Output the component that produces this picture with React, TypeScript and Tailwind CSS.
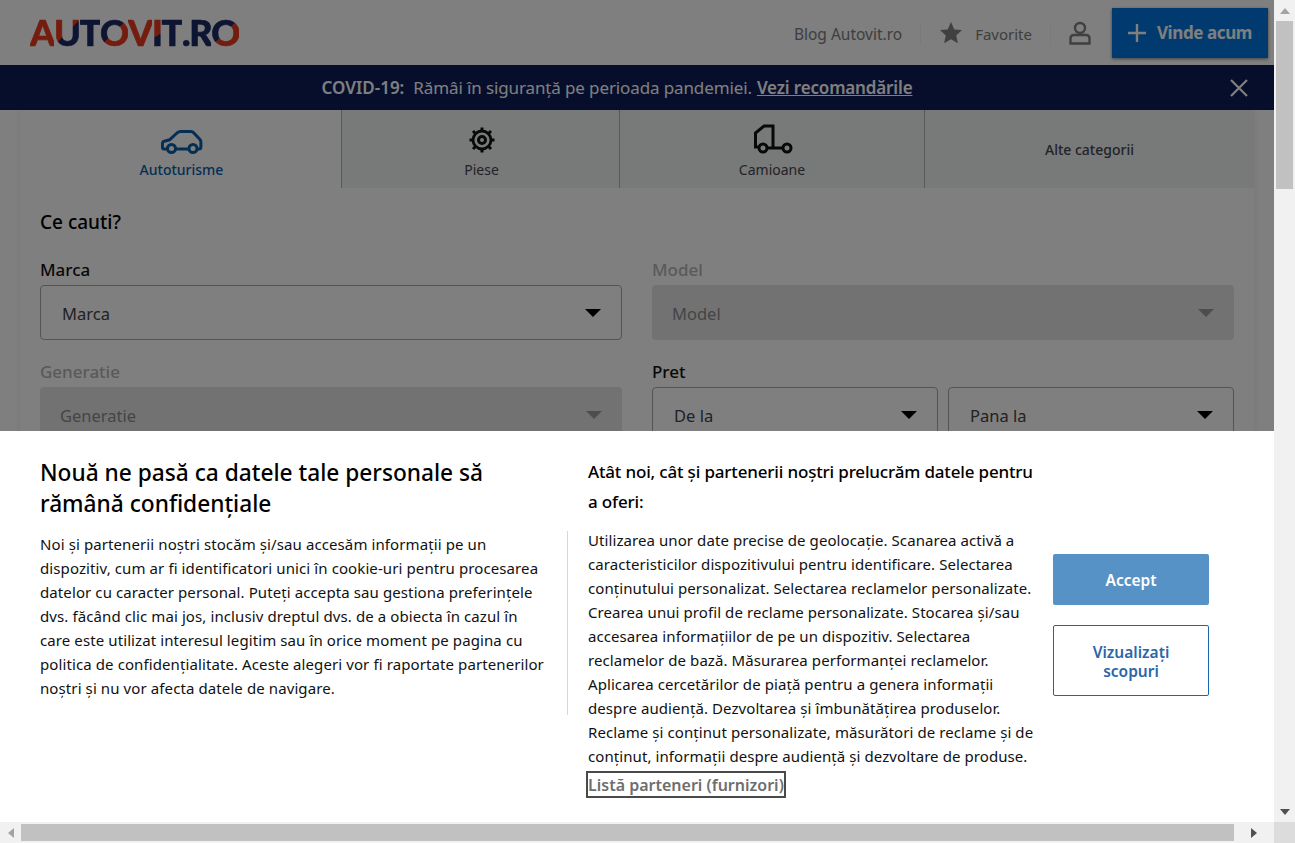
import React from "react";

const font = { fontFamily: '"Noto Sans", sans-serif' };

function Caret({ dim }: { dim?: boolean }) {
  return (
    <svg width="16" height="8" viewBox="0 0 16 8" className={dim ? "text-[#9a9a9a]" : "text-black"}>
      <path d="M0 0h16L8 8z" fill="currentColor" />
    </svg>
  );
}

function Select({ label, disabled, className }: { label: string; disabled?: boolean; className?: string }) {
  return (
    <div
      className={
        "flex h-[55px] items-center justify-between rounded-[4px] pr-[20px] text-[16.5px] font-normal " +
        (disabled ? "bg-[#e4e5e7] pl-[20px] text-[#8a8a8a] " : "border border-[#a8a8a8] bg-white pl-[21px] text-[#444] ") +
        (className ?? "")
      }
    >
      <span className="pt-[3px]">{label}</span>
      <Caret dim={disabled} />
    </div>
  );
}

function LogoLetter({ ch, cls }: { ch: string; cls: string }) {
  return <span className={"bg-clip-text text-transparent [-webkit-text-stroke:0.7px_transparent] " + cls}>{ch}</span>;
}

function Logo() {
  return (
    <div
      className="flex text-[36px] leading-none font-black tracking-[-1.3px] select-none"
      style={{ fontFamily: '"Lato", sans-serif' }}
    >
      <LogoLetter ch="A" cls="bg-[#e8391c]" />
      <LogoLetter ch="U" cls="bg-[linear-gradient(135deg,#e8391c_50%,#1c2a66_50%)]" />
      <LogoLetter ch="T" cls="bg-[#1c2a66]" />
      <LogoLetter ch="O" cls="bg-[linear-gradient(135deg,#1c2a66_50%,#e8391c_50%)]" />
      <LogoLetter ch="V" cls="bg-[#e8391c]" />
      <LogoLetter ch="I" cls="bg-[linear-gradient(150deg,#e8391c_60%,#1c2a66_60%)]" />
      <LogoLetter ch="T" cls="bg-[#1c2a66]" />
      <LogoLetter ch=".R" cls="bg-[#1c2a66]" />
      <LogoLetter ch="O" cls="bg-[linear-gradient(135deg,#1c2a66_50%,#e8391c_50%)]" />
    </div>
  );
}

function CarIcon() {
  return (
    <svg width="42" height="24" viewBox="0 0 42 24" fill="none" stroke="#0a5ca8" strokeWidth="3" strokeLinejoin="round">
      <path d="M6.5 19H3c-1.2 0-1.6-.8-1.6-2v-3.5c0-1 .8-2 1.9-2.3l5.5-1.5L16 3c1-.8 2-1.5 3.500-1.5H30c1.200 0 2 .4 2.700 1.300L39 9.500c.6.7.9 1.500.9 2.500v5c0 1.200-.6 2-1.800 2H36" />
      <path d="M15 19h13" />
      <circle cx="10.500" cy="18.500" r="4" />
      <circle cx="32" cy="18.500" r="4" />
    </svg>
  );
}

function GearIcon() {
  return (
    <svg width="28" height="28" viewBox="0 0 28 28" fill="none" stroke="#111">
      <circle cx="14" cy="14" r="9" strokeWidth="2.800" />
      <circle cx="14" cy="14" r="3.500" strokeWidth="3" />
      <path
        d="M14 1.500v3M14 23.500v3M1.500 14h3M23.500 14h3M5 5l2.200 2.200M20.800 20.800L23 23M23 5l-2.200 2.200M7.200 20.800L5 23"
        strokeWidth="3"
      />
    </svg>
  );
}

function TruckIcon() {
  return (
    <svg width="40" height="31" viewBox="0 0 40 31" fill="none" stroke="#111" strokeWidth="3" className="ml-[2px]">
      <path d="M20 25V3H11L2.500 10V24H5.500" />
      <path d="M15 25h15" />
      <circle cx="10" cy="25" r="4" />
      <circle cx="34" cy="25" r="4" />
    </svg>
  );
}

function Tab({ label, icon, active, className }: { label: string; icon?: React.ReactNode; active?: boolean; className?: string }) {
  return (
    <div
      className={
        "flex h-full flex-col items-center justify-center text-[14px] " +
        (icon ? "pt-[3px] " : "pt-px ") +
        (active ? "bg-white font-medium text-[#0a5ca8] " : "border-l border-[#b5b5b5] bg-[#f1f2f2] text-[#46464e] ") +
        (className ?? "")
      }
    >
      {icon && <div className="flex h-[34px] items-end pb-[1px]">{icon}</div>}
      <span className={icon ? "mt-[5px] leading-[20px]" : "font-medium leading-[20px]"}>{label}</span>
    </div>
  );
}

function Header() {
  return (
    <header className="flex h-[65px] shrink-0 items-center bg-white pl-[30px] pr-[6px]">
      <div className="mt-[-1px]">
        <Logo />
      </div>
      <div className="ml-auto flex items-center text-[15.5px] text-[#7c7c7c]">
        <span className="pt-[4px]">Blog Autovit.ro</span>
        <div className="mx-[18px] h-[22px] w-px bg-[#f4f4f4]" />
        <svg width="24" height="24" viewBox="0 0 24 24" fill="#808080">
          <path d="M12 1l3.300 7.400 7.700.7-5.800 5.300 1.700 7.900L12 18.200l-6.900 4.100 1.700-7.900L1 9.100l7.700-.7z" />
        </svg>
        <span className="ml-[12px] pt-[4px] text-[15px]">Favorite</span>
        <div className="mx-[18px] h-[22px] w-px bg-[#f4f4f4]" />
        <svg width="22" height="24" viewBox="0 0 22 24" fill="none" stroke="#808080" strokeWidth="2.400">
          <circle cx="11" cy="7" r="5" />
          <path d="M1.500 22.500v-5c0-2 1.200-3.500 3.500-3.500h12c2.300 0 3.500 1.500 3.500 3.500v5z" />
        </svg>
        <div className="ml-[21px] flex h-[50px] w-[156px] items-center justify-center gap-[11px] bg-[#0074dc] pt-[1px] text-[17px] font-bold tracking-[-0.4px] text-white shadow-[0_1px_3px_rgba(0,0,0,0.5)]">
          <svg width="18" height="18" viewBox="0 0 18 18" stroke="#fff" strokeWidth="2.400">
            <path d="M9 0v18M0 9h18" />
          </svg>
          Vinde acum
        </div>
      </div>
    </header>
  );
}

function Banner() {
  return (
    <div className="relative flex h-[45px] shrink-0 items-center justify-center bg-[#0c1c58] pr-[40px] text-[17px] text-white">
      <span className="font-semibold">COVID-19:</span>
      <span className="ml-[9px] tracking-[-0.12px]">Rămâi în siguranță pe perioada pandemiei.</span>
      <span className="ml-[5px] font-semibold tracking-[-0.15px] underline">Vezi recomandările</span>
      <svg className="absolute right-[26px] top-[14px]" width="18" height="18" viewBox="0 0 18 18" stroke="#fff" strokeWidth="2.200">
        <path d="M1 1l16 16M17 1L1 17" />
      </svg>
    </div>
  );
}

function Form() {
  return (
    <div className="mx-[20px] flex-1 shadow-[0_0_8px_rgba(0,0,0,0.08)]">
      <div className="grid h-[78px] grid-cols-[321px_278px_305px_1fr]">
        <Tab label="Autoturisme" icon={<CarIcon />} active className="pl-[2px]" />
        <Tab label="Piese" icon={<GearIcon />} className="pl-[2px]" />
        <Tab label="Camioane" icon={<TruckIcon />} />
        <Tab label="Alte categorii" />
      </div>
      <div className="bg-white px-[20px] pt-[20px]">
        <h2 className="text-[19px] font-medium leading-[28px] text-black">Ce cauti?</h2>
        <div className="mt-[19px] grid grid-cols-2 gap-x-[30px] text-[17px] font-medium">
          <div>
            <div className="leading-[30px] text-[#111]">Marca</div>
            <Select label="Marca" />
          </div>
          <div>
            <div className="leading-[30px] text-[#b4b4b4]">Model</div>
            <Select label="Model" disabled />
          </div>
          <div className="mt-[17px]">
            <div className="leading-[30px] text-[#b4b4b4]">Generatie</div>
            <Select label="Generatie" disabled />
          </div>
          <div className="mt-[17px]">
            <div className="leading-[30px] text-[#111]">Pret</div>
            <div className="grid grid-cols-2 gap-[10px]">
              <Select label="De la" />
              <Select label="Pana la" />
            </div>
          </div>
        </div>
      </div>
    </div>
  );
}

function Cookie() {
  return (
    <div className="absolute inset-x-0 bottom-0 z-20 flex h-[391px] bg-white text-[15px] leading-[24px] text-black">
      <div className="ml-[40px] w-[528px] pt-[26px]">
        <div className="w-[507px]">
          <h2 className="text-[22.7px] font-medium leading-[31px] text-black">
            Nouă ne pasă ca datele tale personale să rămână confidențiale
          </h2>
          <p className="mt-[13px] tracking-[0.1px] text-[#111]">
            Noi și partenerii noștri stocăm și/sau accesăm informații pe un dispozitiv, cum ar fi identificatori unici în cookie-uri pentru procesarea datelor cu caracter personal. Puteți accepta sau gestiona preferințele dvs. făcând clic mai jos, inclusiv dreptul dvs. de a obiecta în cazul în care este utilizat interesul legitim sau în orice moment pe pagina cu politica de confidențialitate. Aceste alegeri vor fi raportate partenerilor noștri și nu vor afecta datele de navigare.
          </p>
        </div>
      </div>
      <div className="ml-[-1px] mt-[100px] h-[184px] w-px bg-[#d8d8d8]" />
      <div className="ml-[20px] w-[447px] pt-[26px]">
        <h3 className="text-[17px] font-medium leading-[30px] tracking-[-0.17px] text-black">
          Atât noi, cât și partenerii noștri prelucrăm datele pentru a oferi:
        </h3>
        <p className="mt-[11px] tracking-[0.08px] text-[#111]">
          Utilizarea unor date precise de geolocație. Scanarea activă a caracteristicilor dispozitivului pentru identificare. Selectarea conținutului personalizat. Selectarea reclamelor personalizate. Crearea unui profil de reclame personalizate. Stocarea și/sau accesarea informațiilor de pe un dispozitiv. Selectarea reclamelor de bază. Măsurarea performanței reclamelor. Aplicarea cercetărilor de piață pentru a genera informații despre audiență. Dezvoltarea și îmbunătățirea produselor. Reclame și conținut personalizate, măsurători de reclame și de conținut, informații despre audiență și dezvoltare de produse.
        </p>
        <span className="ml-[-2px] mt-[3px] inline-block border-2 border-[#4a4a4a] pt-[2px] text-[16px] font-semibold leading-[21px] text-[#6e6e6e]">
          Listă parteneri (furnizori)
        </span>
      </div>
      <div className="ml-[18px] flex w-[156px] flex-col gap-[20px] pt-[123px] text-[15.5px] font-semibold leading-[19px]">
        <div className="flex h-[51px] items-center justify-center rounded-[2px] bg-[#5792c6] pt-px text-white">Accept</div>
        <div className="flex h-[71px] items-center justify-center rounded-[2px] border border-[#1c66ab] px-[20px] pt-[2px] text-center text-[#2a67a8]">
          Vizualizați scopuri
        </div>
      </div>
    </div>
  );
}

function VScroll() {
  return (
    <div className="z-30 flex w-[21px] shrink-0 flex-col items-center bg-[#f1f1f1]">
      <div className="flex h-[21px] items-center justify-center">
        <svg width="10" height="6" viewBox="0 0 10 6"><path d="M5 0l5 6H0z" fill="#a3a3a3" /></svg>
      </div>
      <div className="h-[168px] w-[17px] bg-[#c1c1c1]" />
      <div className="flex-1" />
      <div className="flex h-[21px] items-center justify-center">
        <svg width="10" height="6" viewBox="0 0 10 6"><path d="M0 0h10L5 6z" fill="#505050" /></svg>
      </div>
    </div>
  );
}

function HScroll() {
  return (
    <div className="z-30 flex h-[21px] shrink-0 bg-[#f1f1f1]">
      <div className="flex w-[21px] items-center justify-center">
        <svg width="6" height="10" viewBox="0 0 6 10"><path d="M6 0v10L0 5z" fill="#a3a3a3" /></svg>
      </div>
      <div className="my-[2px] h-[17px] w-[1213px] bg-[#c1c1c1]" />
      <div className="flex flex-1 items-center justify-center">
        <svg width="6" height="10" viewBox="0 0 6 10"><path d="M0 0l6 5-6 5z" fill="#505050" /></svg>
      </div>
      <div className="w-[21px] bg-[#dcdcdc]" />
    </div>
  );
}

export default function App() {
  return (
    <div className="flex h-[843px] w-[1295px] flex-col overflow-hidden bg-white" style={font}>
      <div className="flex min-h-0 flex-1">
        <div className="relative flex min-w-0 flex-1 flex-col overflow-hidden bg-white">
          <Header />
          <Banner />
          <Form />
          <div className="absolute inset-0 z-10 bg-black/50" />
          <Cookie />
        </div>
        <VScroll />
      </div>
      <HScroll />
    </div>
  );
}
